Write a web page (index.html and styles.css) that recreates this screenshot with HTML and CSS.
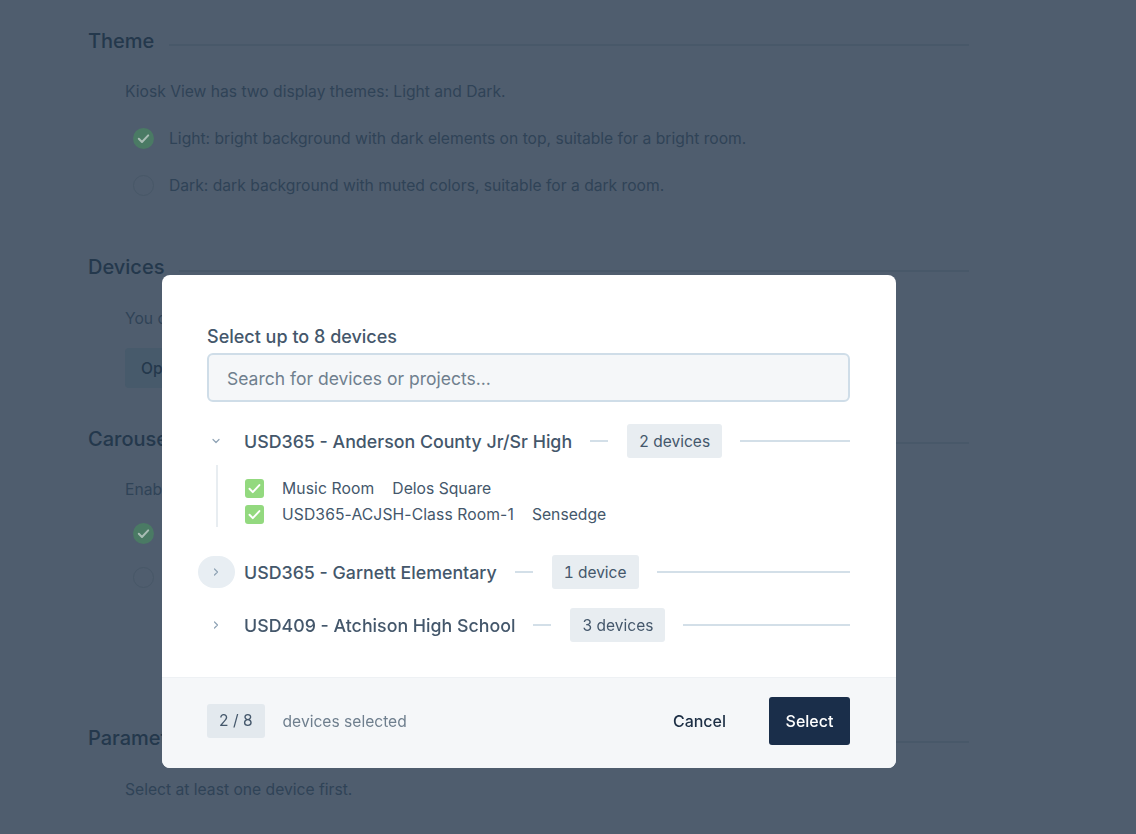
FILE: index.html
```html
<!DOCTYPE html>
<html lang="en">
<head>
<meta charset="utf-8">
<title>Kiosk View</title>
<link rel="stylesheet" href="styles.css">
</head>
<body>
<main class="page">
  <section class="section section-theme">
    <h2 class="section-head"><span>Theme</span></h2>
    <div class="section-body">
      <p class="copy">Kiosk View has two display themes: Light and Dark.</p>
      <div class="radio-row"><span class="radio radio-on"><svg viewBox="0 0 21 21" width="21" height="21"><path d="M5.8 10.8l3.2 3.2 6.2-6.6" fill="none" stroke="#a9bdb5" stroke-width="2" stroke-linecap="round" stroke-linejoin="round"/></svg></span><span>Light: bright background with dark elements on top, suitable for a bright room.</span></div>
      <div class="radio-row"><span class="radio"></span><span>Dark: dark background with muted colors, suitable for a dark room.</span></div>
    </div>
  </section>
  <section class="section section-devices">
    <h2 class="section-head"><span>Devices</span></h2>
    <div class="section-body">
      <p class="copy">You can show up to 8 devices.</p>
      <button class="ghost-btn">Open device selector</button>
    </div>
  </section>
  <section class="section section-carousel">
    <h2 class="section-head"><span>Carousel</span></h2>
    <div class="section-body">
      <p class="copy">Enable carousel.</p>
      <div class="radio-row tight"><span class="radio radio-on"><svg viewBox="0 0 21 21" width="21" height="21"><path d="M5.8 10.8l3.2 3.2 6.2-6.6" fill="none" stroke="#a9bdb5" stroke-width="2" stroke-linecap="round" stroke-linejoin="round"/></svg></span><span>Enabled</span></div>
      <div class="radio-row tight"><span class="radio"></span><span>Disabled</span></div>
    </div>
  </section>
  <section class="section section-params">
    <h2 class="section-head"><span>Parameters</span></h2>
    <div class="section-body">
      <p class="copy">Select at least one device first.</p>
    </div>
  </section>
</main>

<div class="modal" role="dialog">
  <div class="modal-main">
    <label class="modal-label">Select up to 8 devices</label>
    <input class="search" type="text" placeholder="Search for devices or projects...">

    <div class="group group-open">
      <div class="group-row">
        <span class="chev"><svg viewBox="0 0 10 10" width="10" height="10"><path d="M2 3.5l3 3 3-3" fill="none" stroke="#8fa3b5" stroke-width="1.2" stroke-linecap="round" stroke-linejoin="round"/></svg></span>
        <span class="group-name">USD365 - Anderson County Jr/Sr High</span>
        <span class="dash"></span>
        <span class="pill">2 devices</span>
        <span class="rule"></span>
      </div>
      <ul class="device-list">
        <li class="device"><span class="check"><svg viewBox="0 0 19 19" width="19" height="19"><path d="M4.5 9.8l3.3 3.3 6.6-7" fill="none" stroke="#fff" stroke-width="2" stroke-linecap="round" stroke-linejoin="round"/></svg></span><span class="device-name">Music Room</span><span>Delos Square</span></li>
        <li class="device"><span class="check"><svg viewBox="0 0 19 19" width="19" height="19"><path d="M4.5 9.8l3.3 3.3 6.6-7" fill="none" stroke="#fff" stroke-width="2" stroke-linecap="round" stroke-linejoin="round"/></svg></span><span class="device-name">USD365-ACJSH-Class Room-1</span><span>Sensedge</span></li>
      </ul>
    </div>

    <div class="group">
      <div class="group-row">
        <span class="chev chev-hover"><svg viewBox="0 0 10 10" width="10" height="10"><path d="M3.5 2l3 3-3 3" fill="none" stroke="#8fa3b5" stroke-width="1.2" stroke-linecap="round" stroke-linejoin="round"/></svg></span>
        <span class="group-name">USD365 - Garnett Elementary</span>
        <span class="dash"></span>
        <span class="pill">1 device</span>
        <span class="rule"></span>
      </div>
    </div>

    <div class="group">
      <div class="group-row">
        <span class="chev"><svg viewBox="0 0 10 10" width="10" height="10"><path d="M3.5 2l3 3-3 3" fill="none" stroke="#8fa3b5" stroke-width="1.2" stroke-linecap="round" stroke-linejoin="round"/></svg></span>
        <span class="group-name">USD409 - Atchison High School</span>
        <span class="dash"></span>
        <span class="pill">3 devices</span>
        <span class="rule"></span>
      </div>
    </div>
  </div>
  <footer class="modal-foot">
    <span class="count">2 / 8</span>
    <span class="count-label">devices selected</span>
    <button class="btn-cancel">Cancel</button>
    <button class="btn-select">Select</button>
  </footer>
</div>
</body>
</html>
```
FILE: styles.css
```css
* { box-sizing: border-box; }
html, body { height: 100%; }
body {
  margin: 0;
  overflow: hidden;
  background: #4f5d6e;
  font-family: Inter, "Noto Sans", sans-serif;
}
button, input { font-family: inherit; }

.page { width: 881px; margin-left: 88px; color: #2f4357; }
.section-head {
  display: flex;
  align-items: center;
  gap: 15px;
  margin: 0;
  height: 28px;
  font-size: 20px;
  font-weight: 500;
  line-height: 28px;
  color: #24384c;
}
.section-head::after {
  content: "";
  flex: 1;
  height: 2px;
  margin-top: 7px;
  background: #485869;
}
.section-body { padding-left: 37px; font-size: 15.65px; }
.copy { margin: 0 0 -1px; line-height: 24px; }
.section-theme { padding-top: 27px; height: 253px; }
.section-theme .copy { margin-top: 25px; }
.radio-row { display: flex; align-items: center; gap: 15px; height: 24px; margin-top: 23px; padding-left: 8px; }
.radio-row.tight { margin-top: 20px; }
.radio { width: 21px; height: 21px; flex: none; border-radius: 50%; border: 1px solid #475767; }
.radio-on { background: #4a7a64; border: 0; }
.radio svg { display: block; }
.section-devices { height: 172px; }
.section-devices .copy { margin-top: 26px; }
.ghost-btn {
  margin-top: 18px;
  height: 40px;
  padding: 0 16px;
  border: 0;
  border-radius: 4px;
  background: #475a6b;
  color: #24384c;
  font-size: 15.6px;
  font-weight: 500;
}
.section-carousel { height: 299px; }
.section-carousel .copy { margin-top: 25px; }
.section-params .copy { margin-top: 26px; }

.modal {
  position: fixed;
  left: 162px;
  top: 275px;
  width: 734px;
  height: 493px;
  display: flex;
  flex-direction: column;
  overflow: hidden;
  border-radius: 8px;
  background: #fff;
  color: #44576b;
}
.modal-main { flex: 1; padding: 49px 46px 0 45px; }
.modal-label { display: block; font-size: 18px; font-weight: 500; line-height: 26px; }
.search {
  display: block;
  width: 100%;
  height: 49px;
  margin-top: 3px;
  padding: 1px 18px 0;
  border: 2px solid #cfdde8;
  border-radius: 6px;
  background: #f5f7f9;
  font-size: 17.5px;
  color: #44576b;
  outline: none;
}
.search::placeholder { color: #6f7f8e; opacity: 1; }

.group-row { display: flex; align-items: center; height: 34px; }
.group-open { margin-top: 22px; }
.group { margin-bottom: 19px; }
.group-open { margin-bottom: 28px; }
.chev {
  width: 37px;
  height: 32px;
  margin-left: -9px;
  flex: none;
  display: flex;
  align-items: center;
  justify-content: center;
  border-radius: 16px;
}
.chev svg { margin-right: 1px; }
.chev-hover { background: #e8eef3; }
.group-name { margin-left: 9px; font-size: 17.8px; font-weight: 500; white-space: nowrap; }
.dash { width: 18px; height: 2px; margin: 0 19px 0 18px; flex: none; background: #d3dfe8; }
.pill {
  flex: none;
  height: 34px;
  padding: 0 12px;
  display: flex;
  align-items: center;
  border-radius: 3px;
  background: #e8edf1;
  font-size: 15.5px;
  font-variant-numeric: tabular-nums;
}
.rule { flex: 1; height: 2px; margin-left: 18px; background: #d3dfe8; }

.device-list {
  list-style: none;
  margin: 7px 0 0 9px;
  padding: 10px 0 0 27px;
  height: 62px;
  border-left: 2px solid #e8edf1;
}
.device { display: flex; align-items: center; height: 26px; font-size: 15.7px; }
.device-name { margin-right: 18px; letter-spacing: 0.1px; }
.check {
  width: 19px;
  height: 19px;
  margin-right: 18px;
  flex: none;
  border-radius: 3px;
  background: #93d97f;
}
.check svg { display: block; }

.modal-foot {
  flex: none;
  height: 91px;
  display: flex;
  align-items: center;
  padding: 0 46px 5px 45px;
  border-top: 1px solid #eef1f4;
  background: #f5f7f9;
}
.count {
  height: 34px;
  padding: 0 12px;
  display: flex;
  align-items: center;
  border-radius: 3px;
  background: #e3e9ee;
  font-size: 15.6px;
}
.count-label { margin: 2px 0 0 18px; font-size: 15.6px; color: #6f7f8e; }
.btn-cancel {
  margin-left: auto;
  padding: 0;
  border: 0;
  background: none;
  font-size: 16px;
  font-weight: 500;
  color: #1d2f45;
}
.btn-select {
  width: 81px;
  height: 48px;
  margin-left: 43px;
  border: 0;
  border-radius: 3px;
  background: #1a2e4a;
  color: #fff;
  font-size: 16px;
  font-weight: 500;
}
```
